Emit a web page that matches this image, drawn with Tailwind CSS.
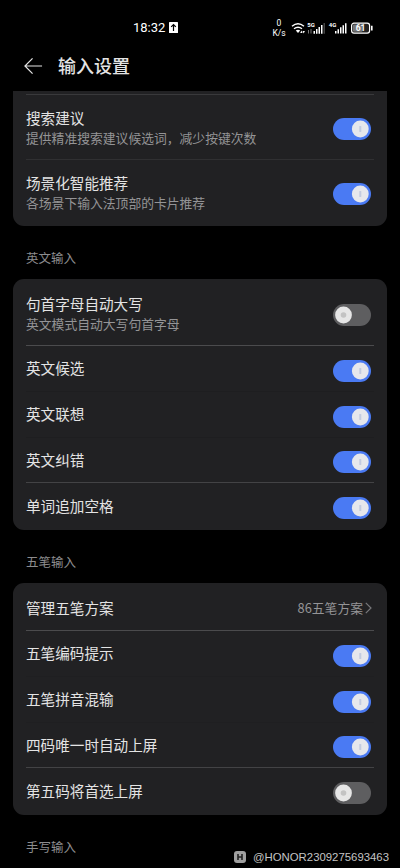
<!DOCTYPE html>
<html lang="zh-CN">
<head>
<meta charset="utf-8">
<title>输入设置</title>
<script src="https://cdn.jsdelivr.net/npm/@tailwindcss/browser@4"></script>
</head>
<body class="bg-black">
<svg class="hidden">
  <symbol id="on" viewBox="0 0 38 22"><rect width="38" height="22" rx="11" fill="#4a7af3"/><circle cx="27.3" cy="11" r="8.4" fill="#e6e7ec"/><rect x="26.3" y="8" width="2" height="6" rx=".6" fill="#c3cbe0"/></symbol>
  <symbol id="off" viewBox="0 0 38 22"><rect width="38" height="22" rx="11" fill="#5e5e60"/><circle cx="10.5" cy="11" r="8.4" fill="#e6e6e6"/><circle cx="10.5" cy="11" r="2.8" fill="#c3c3c3"/></symbol>
</svg>
<div class="flex h-[868px] w-[400px] flex-col overflow-hidden bg-black font-['Noto_Sans_CJK_SC','Noto_Sans',sans-serif] text-[14.6px] text-[#e4e4e4]">
  <header class="flex h-[44px] shrink-0 items-center pt-[11px] pl-[133px] text-white">
    <span class="w-[32px] font-['Roboto',sans-serif] text-[13px] leading-4 whitespace-nowrap">18:32</span>
    <svg class="ml-[4px] h-[11px] w-[9px]" viewBox="0 0 9 11"><rect width="9" height="11" rx=".6" fill="#fff"/><path d="M4.5 9V2.6M2.2 4.9l2.3-2.3 2.3 2.3" fill="none" stroke="#000" stroke-width="1.2"/></svg>
    <div class="ml-[94px] w-[14px] text-center font-['Roboto',sans-serif] text-[8.5px] leading-[10px]">0<br>K/s</div>
    <svg class="ml-[5px] h-[14px] w-[83px]" viewBox="0 0 83 14" fill="#fff">
      <g fill="none" stroke="#fff" stroke-width="1.4"><path d="M1 5.3Q7 .2 13 5.3M3 7.8q4-3.2 8 0"/></g>
      <path d="M4.8 9.5q2.2-1.5 4.4 0L7 12z"/><path d="M9.2 12l1.2-2.5 1.2 2.5zM11.5 10h2.4l-1.2 2.5z"/>
      <text x="16.2" y="5.8" font-size="6" font-weight="700" font-family="Roboto">5G</text>
      <path fill="#777" d="M17 9h1v3.5h-1zM19.500 8h1v4.500h-1z"/>
      <path d="M22.500 10h1.500v2.800h-1.500zM25 8h1.500v4.800H25zM27.500 6h1.500v6.800h-1.500zM30 4h1.500v8.800H30z"/><path fill="#444" d="M32.500 2h1.500v10.800h-1.500z"/>
      <text x="37.800" y="5.800" font-size="6" font-weight="700" font-family="Roboto">4G</text>
      <path d="M44 10h1.500v2.500H44zM46.500 8.200h1.500v4.300h-1.500zM49 6.200h1.500v6.300H49zM51.500 4.200H53v8.300h-1.500zM54 2.200h1.500v10.300H54z"/>
      <rect x="60.600" y="2.100" width="18" height="10" rx="2.400" fill="#222" stroke="#fff" stroke-width="1.200"/><rect x="62" y="3.500" width="9.500" height="7.200" rx="1" fill="#777"/>
      <path d="M80 4.800h1.600v4.600H80z"/>
      <text x="69.600" y="10.200" text-anchor="middle" font-size="8.500" font-weight="700" font-family="Roboto">61</text>
    </svg>
  </header>
  <div class="flex h-[47px] shrink-0 items-center pb-[4px] pl-[24px]">
    <svg class="h-[18px] w-[19px]" viewBox="0 0 20 18" fill="none" stroke="#e4e4e4" stroke-width="1.300"><path d="M19 9H1M9 1L1 9l8 8"/></svg>
    <h1 class="mb-px ml-[15px] text-[18px] leading-6 font-medium">输入设置</h1>
  </div>

  <section class="h-[135px] shrink-0 rounded-b-[11px] bg-[#212123] mx-[13px] px-[13px] pt-[3px]">
    <hr class="h-px border-0 bg-[#39393b]">
    <div class="flex h-[64px] items-center justify-between pr-[3px] pt-[2px]">
      <div class="mb-[3px]"><div class="leading-[21px]">搜索建议</div><div class="text-[12.8px] leading-[19px] text-[#949496]">提供精准搜索建议候选词，减少按键次数</div></div>
      <svg class="mt-px h-[22px] w-[38px]"><use href="#on"/></svg>
    </div>
    <hr class="h-px border-0 bg-[#303032]">
    <div class="flex h-[64px] items-center justify-between pr-[3px] pt-[2px]">
      <div class="mb-[3px]"><div class="leading-[21px]">场景化智能推荐</div><div class="text-[12.8px] leading-[19px] text-[#949496]">各场景下输入法顶部的卡片推荐</div></div>
      <svg class="mt-px h-[22px] w-[38px]"><use href="#on"/></svg>
    </div>
  </section>

  <h2 class="flex h-[53px] shrink-0 items-center pt-[12px] pl-[26px] text-[12.5px] text-[#8c8c8e]">英文输入</h2>

  <section class="h-[251px] shrink-0 rounded-[11px] bg-[#212123] mx-[13px] px-[13px]">
    <div class="flex h-[66px] items-center justify-between pr-[3px] pt-[4px]">
      <div class="mb-[3px]"><div class="leading-[21px]">句首字母自动大写</div><div class="text-[12.8px] leading-[19px] text-[#949496]">英文模式自动大写句首字母</div></div>
      <svg class="mt-[2px] h-[22px] w-[38px]"><use href="#off"/></svg>
    </div>
    <hr class="h-px border-0 bg-[#4b4b4d]">
    <div class="flex h-[45px] items-center justify-between pb-[2px] pr-[3px]">英文候选<svg class="mt-[6px] h-[22px] w-[38px]"><use href="#on"/></svg></div>
    <hr class="h-px border-0 bg-[#1e1e20]">
    <div class="flex h-[45px] items-center justify-between pb-[2px] pr-[3px]">英文联想<svg class="mt-[6px] h-[22px] w-[38px]"><use href="#on"/></svg></div>
    <hr class="h-px border-0 bg-[#1e1e20]">
    <div class="flex h-[44px] items-center justify-between pr-[3px]">英文纠错<svg class="mt-[4px] h-[22px] w-[38px]"><use href="#on"/></svg></div>
    <hr class="h-px border-0 bg-[#434345]">
    <div class="flex h-[47px] items-center justify-between pb-[2px] pr-[3px]">单词追加空格<svg class="mt-[5px] h-[22px] w-[38px]"><use href="#on"/></svg></div>
  </section>

  <h2 class="flex h-[53px] shrink-0 items-center pt-[12px] pl-[26px] text-[12.5px] text-[#8c8c8e]">五笔输入</h2>

  <section class="h-[232px] shrink-0 rounded-[11px] bg-[#212123] mx-[13px] px-[13px]">
    <div class="flex h-[47px] items-center justify-between pt-[3px] pr-[2px]">管理五笔方案
      <span class="flex items-center text-[12.8px] text-[#949496]">86五笔方案<svg class="ml-[2px] h-[12px] w-[7px]" viewBox="0 0 7 12" fill="none" stroke="#77777a" stroke-width="1.200"><path d="M.8.8L6 6 .8 11.200"/></svg></span>
    </div>
    <hr class="h-px border-0 bg-[#4b4b4d]">
    <div class="flex h-[45px] items-center justify-between pb-[2px] pr-[3px]">五笔编码提示<svg class="mt-[6px] h-[22px] w-[38px]"><use href="#on"/></svg></div>
    <hr class="h-px border-0 bg-[#1f1f21]">
    <div class="flex h-[45px] items-center justify-between pb-[2px] pr-[3px]">五笔拼音混输<svg class="mt-[6px] h-[22px] w-[38px]"><use href="#on"/></svg></div>
    <hr class="h-px border-0 bg-[#1f1f21]">
    <div class="flex h-[44px] items-center justify-between pr-[3px]">四码唯一时自动上屏<svg class="mt-[4px] h-[22px] w-[38px]"><use href="#on"/></svg></div>
    <hr class="h-px border-0 bg-[#434345]">
    <div class="flex h-[47px] items-center justify-between pb-[2px] pr-[3px]">第五码将首选上屏<svg class="mt-[5px] h-[22px] w-[38px]"><use href="#off"/></svg></div>
  </section>

  <footer class="flex h-[53px] shrink-0 justify-between pr-[11px] pl-[26px]">
    <h2 class="pt-[22px] text-[12.5px] leading-[19px] text-[#8c8c8e]">手写输入</h2>
    <div class="flex items-center pt-[30px] font-['Liberation_Sans',sans-serif] text-[10.5px]">
      <svg class="mr-[7px] h-[12px] w-[12px]" viewBox="0 0 12 12"><rect width="12" height="12" rx="3" fill="#a0a0a0"/><path d="M4 3v6M8 3v6M4 6h4" stroke="#222" stroke-width="1.600" fill="none"/></svg>
      <svg class="h-[14px] w-[136px]" viewBox="0 0 136 14"><text x="0" y="10.500" textLength="136" lengthAdjust="spacingAndGlyphs" font-size="10.500" fill="#c4c4c4">@HONOR2309275693463</text></svg>
    </div>
  </footer>
</div>
</body>
</html>
